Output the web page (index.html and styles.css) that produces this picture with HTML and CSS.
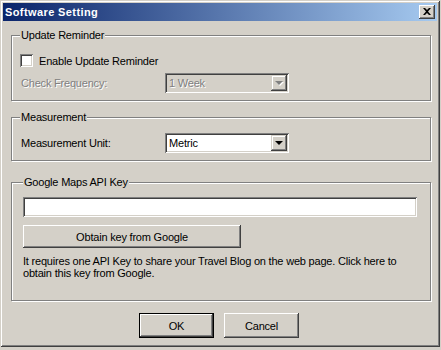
FILE: index.html
```html
<!DOCTYPE html>
<html>
<head>
  <title>Software Setting</title>
  <link rel="stylesheet" href="styles.css">
</head>
<body>
  <div class="window">
    <div class="titlebar">
      <span class="title">Software Setting</span>
      <button class="close" aria-label="Close">
        <svg width="8" height="7" viewBox="0 0 8 7">
          <path d="M0 0h2l2 2 2-2h2L5 3.5 8 7H6L4 5 2 7H0l3-3.5z"/>
        </svg>
      </button>
    </div>

    <div class="content">
      <fieldset class="group group-update">
        <legend>Update Reminder</legend>
        <label class="check-row">
          <span class="checkbox"></span>
          Enable Update Reminder
        </label>
        <div class="field-row">
          <span class="field-label disabled">Check Frequency:</span>
          <div class="combo disabled">
            <span class="combo-value">1 Week</span>
            <span class="combo-btn"><span class="arrow"></span></span>
          </div>
        </div>
      </fieldset>

      <fieldset class="group group-measure">
        <legend>Measurement</legend>
        <div class="field-row">
          <span class="field-label">Measurement Unit:</span>
          <div class="combo">
            <span class="combo-value">Metric</span>
            <span class="combo-btn"><span class="arrow"></span></span>
          </div>
        </div>
      </fieldset>

      <fieldset class="group group-api">
        <legend>Google Maps API Key</legend>
        <div class="text-field"></div>
        <button class="btn btn-obtain">Obtain key from Google</button>
        <p class="note">It requires one API Key to share your Travel Blog on the web page. Click here to<br>obtain this key from Google.</p>
      </fieldset>

      <div class="actions">
        <button class="btn btn-default">OK</button>
        <button class="btn">Cancel</button>
      </div>
    </div>
  </div>
</body>
</html>
```

FILE: styles.css
```css
:root {
  --face: #d4d0c8;
  --shadow: #808080;
  --dark: #404040;
  --light: #ffffff;
  --title-from: #0a246a;
  --title-to: #a6caf0;
}

body {
  margin: 0;
  background: var(--face);
  font-family: "Liberation Sans", Arial, sans-serif;
  font-size: 11px;
  letter-spacing: -0.2px;
  color: #000;
}

.window {
  width: 440px;
  height: 347px;
  box-sizing: border-box;
  padding: 3px;
  background: var(--face);
  box-shadow:
    inset 1px 1px var(--face),
    inset -1px -1px var(--dark),
    inset 2px 2px var(--light),
    inset -2px -2px var(--shadow);
}

.titlebar {
  height: 18px;
  display: flex;
  align-items: center;
  justify-content: space-between;
  padding: 0 2px;
  background: linear-gradient(to right, var(--title-from), var(--title-to));
}

.title {
  color: #fff;
  font-weight: bold;
  font-size: 11px;
  letter-spacing: 0.4px;
}

.close {
  width: 16px;
  height: 14px;
  padding: 0;
  border: none;
  display: flex;
  align-items: center;
  justify-content: center;
  background: var(--face);
  box-shadow:
    inset -1px -1px var(--dark),
    inset 1px 1px var(--light),
    inset -2px -2px var(--shadow),
    inset 2px 2px var(--face);
}

.close svg {
  fill: #000;
  margin-top: -1px;
}

.content {
  padding: 8px 6px 0 8px;
}

/* group boxes */
.group {
  margin: 0;
  min-width: 0;
  border: 1px solid var(--shadow);
  padding: 9px 8px 7px 8px;
  box-shadow: inset 1px 1px var(--light), 1px 1px var(--light);
}

.group legend {
  padding: 0 1px;
  line-height: 13px;
  background: var(--face);
}

.group-measure {
  margin-top: 10px;
}

.group-api {
  margin-top: 15px;
  padding: 8px 8px 21px 11px;
}

.check-row {
  height: 19px;
  display: flex;
  align-items: center;
  gap: 6px;
}

.checkbox {
  width: 13px;
  height: 13px;
  box-sizing: border-box;
  background: #fff;
  box-shadow:
    inset 1px 1px var(--shadow),
    inset -1px -1px var(--light),
    inset 2px 2px var(--dark),
    inset -2px -2px var(--face);
}

.field-row {
  display: flex;
  align-items: center;
  margin-top: 3px;
}

.group-measure .field-row {
  margin-top: 0;
}

.field-label {
  width: 144px;
  padding-left: 1px;
}

.disabled {
  color: var(--shadow);
  text-shadow: 1px 1px var(--light);
}

/* combo box */
.combo {
  width: 124px;
  height: 20px;
  box-sizing: border-box;
  padding: 2px;
  display: flex;
  align-items: stretch;
  background: #fff;
  box-shadow:
    inset 1px 1px var(--shadow),
    inset -1px -1px var(--light),
    inset 2px 2px var(--dark),
    inset -2px -2px var(--face);
}

.combo.disabled {
  background: var(--face);
}

.combo-value {
  flex: 1;
  padding-left: 2px;
  display: flex;
  align-items: center;
}

.combo-btn {
  width: 16px;
  display: flex;
  align-items: center;
  justify-content: center;
  background: var(--face);
  box-shadow:
    inset -1px -1px var(--dark),
    inset 1px 1px var(--face),
    inset -2px -2px var(--shadow),
    inset 2px 2px var(--light);
}

.arrow {
  width: 0;
  height: 0;
  border-left: 4px solid transparent;
  border-right: 4px solid transparent;
  border-top: 4px solid #000;
}

.combo.disabled .arrow {
  border-top-color: var(--shadow);
  filter: drop-shadow(1px 1px 0 var(--light));
}

/* api key */
.text-field {
  width: 394px;
  height: 20px;
  background: #fff;
  box-shadow:
    inset 1px 1px var(--shadow),
    inset -1px -1px var(--light),
    inset 2px 2px var(--dark),
    inset -2px -2px var(--face);
}

.btn {
  height: 25px;
  width: 75px;
  padding: 0;
  border: none;
  font-family: inherit;
  font-size: 11px;
  letter-spacing: inherit;
  color: #000;
  background: var(--face);
  box-shadow:
    inset -1px -1px var(--dark),
    inset 1px 1px var(--light),
    inset -2px -2px var(--shadow),
    inset 2px 2px var(--face);
}

.btn-obtain {
  display: block;
  width: 218px;
  height: 23px;
  margin-top: 8px;
}

.btn-default {
  border: 1px solid #000;
}

.note {
  margin: 7px 0 0;
  line-height: 12px;
}

.actions {
  display: flex;
  justify-content: center;
  gap: 10px;
  margin-top: 12px;
  padding-right: 4px;
}
```
